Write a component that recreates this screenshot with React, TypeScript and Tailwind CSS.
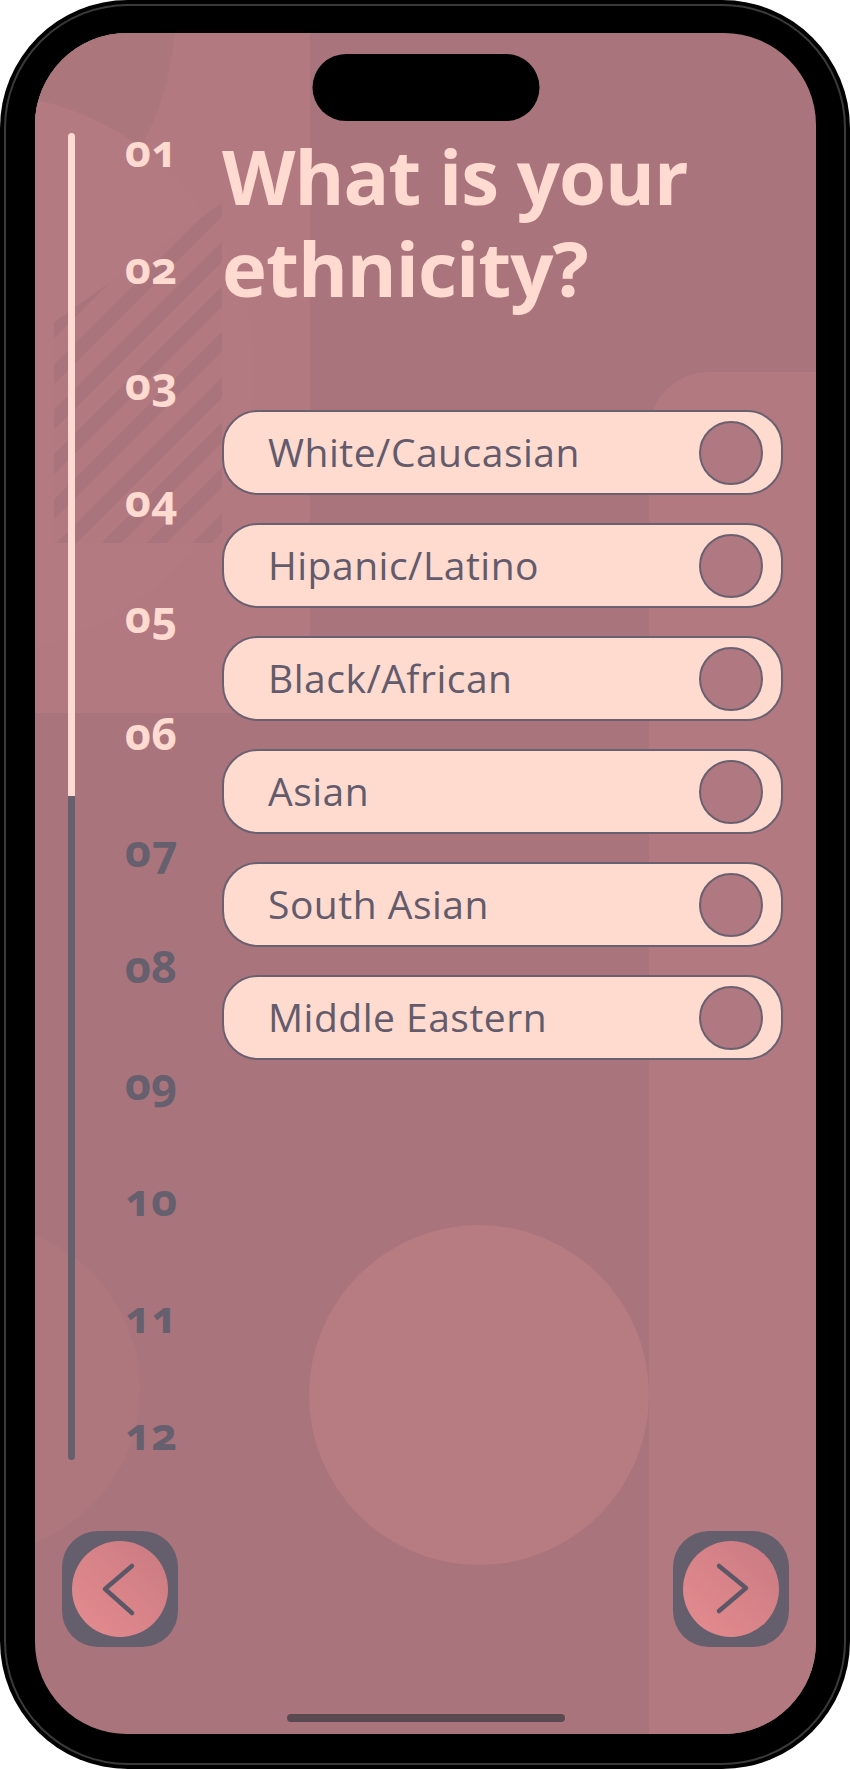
import React from "react";

const options = [
  "White/Caucasian",
  "Hipanic/Latino",
  "Black/African",
  "Asian",
  "South Asian",
  "Middle Eastern",
];

const nums = ["01", "02", "03", "04", "05", "06", "07", "08", "09", "10", "11", "12"];

function NavButton({ dir }: { dir: "left" | "right" }) {
  return (
    <div className="w-[116px] h-[116px] rounded-[36px] bg-[#655F6D] p-[10px]">
      <div className="w-full h-full rounded-full bg-[linear-gradient(45deg,#E48C90_0%,#D98489_45%,#C97A82_100%)] flex items-center justify-center">
        <svg width="96" height="96" viewBox="0 0 96 96" fill="none">
          {dir === "left" ? (
            <polyline points="60,25 33,48 60,72" stroke="#5C5767" strokeWidth="4.5" strokeLinecap="round" strokeLinejoin="round" />
          ) : (
            <polyline points="36,25 63,47 36,70" stroke="#5C5767" strokeWidth="4.5" strokeLinecap="round" strokeLinejoin="round" />
          )}
        </svg>
      </div>
    </div>
  );
}

export default function App() {
  return (
    <div className="w-[850px] h-[1770px] bg-white">
      <div className="w-[850px] h-[1769px] rounded-[128px] bg-black p-[4px]">
        <div className="w-full h-full rounded-[124px] border-2 border-[#3a3a3a] bg-black pt-[27px] pb-[29px] pl-[29px] pr-[28px]">
          <div className="relative w-full h-full overflow-hidden rounded-[92px] bg-[#A9747C]">
            {/* background decorations */}
            <div className="absolute left-0 top-0 w-[275px] h-[680px] rounded-br-[80px] bg-[#B27980]" />
            <div className="absolute left-[-420px] top-[-300px] w-[560px] h-[560px] rounded-full bg-[#AC767D]" />
            <div className="absolute left-[-340px] top-[60px] w-[560px] h-[560px] rounded-full bg-[#B37A81]" />
            <div className="absolute left-[19px] top-[170px] w-[168px] h-[340px] [clip-path:polygon(0_35%,100%_0,100%_100%,0_100%)] bg-[repeating-linear-gradient(135deg,#B27980_0px,#B27980_18px,#AA747C_18px,#AA747C_32px)]" />
            <div className="absolute left-[614px] top-[339px] w-[200px] h-[1500px] rounded-tl-[60px] bg-[#B27980]" />
            <div className="absolute left-[-225px] top-[1191px] w-[330px] h-[330px] rounded-full bg-[#AE777E]" />
            <div className="absolute left-[274px] top-[1192px] w-[340px] h-[340px] rounded-full bg-[#B67C81]" />

            {/* notch */}
            <div className="absolute left-1/2 top-[21px] -translate-x-1/2 w-[227px] h-[67px] rounded-full bg-black z-10" />

            <div className="relative flex flex-col h-full">
              <div className="flex items-start">
                <div className="ml-[33px] mt-[100px] flex flex-col w-[7px]">
                  <div className="h-[663px] rounded-t-full bg-[#FFDAD0]" />
                  <div className="h-[664px] rounded-b-full bg-[#665F6D]" />
                </div>
                <div className="ml-[50px] mt-[59px] w-[97px] flex flex-col font-['Noto_Sans',sans-serif] font-bold text-[45px] oldstyle-nums">
                  {nums.map((n, i) => (
                    <div
                      key={n}
                      className={`h-[116.6px] leading-[116.6px] ${i < 6 ? "text-[#FFDAD0]" : "text-[#665F6D]"}`}
                    >
                      {n}
                    </div>
                  ))}
                </div>
                <div className="w-[561px] flex flex-col">
                  <h1 className="mt-[97px] font-['Open_Sans',sans-serif] font-bold text-[76px] tracking-[-1px] text-[#FFDAD0]">
                    <span className="block h-[92px] leading-[92px]">What is your</span>
                    <span className="block h-[92px] leading-[92px]">ethnicity?</span>
                  </h1>
                  <div className="mt-[96px] flex flex-col gap-[28px]">
                    {options.map((o) => (
                      <div
                        key={o}
                        className="h-[85px] rounded-[36px] border-2 border-[#6A6170] bg-[#FFDACF] flex items-center justify-between pl-[44px] pr-[18px]"
                      >
                        <span className="font-['Open_Sans',sans-serif] text-[39px] tracking-[0.5px] text-[#625B6C]">{o}</span>
                        <div className="w-[64px] h-[64px] rounded-full border-2 border-[#6A6170] bg-[#B07880]" />
                      </div>
                    ))}
                  </div>
                </div>
              </div>

              <div className="mt-auto flex justify-between px-[27px]">
                <NavButton dir="left" />
                <NavButton dir="right" />
              </div>
              <div className="mx-auto mt-[67px] mb-[12px] w-[278px] h-[8px] rounded-full bg-[#5B4951]" />
            </div>
          </div>
        </div>
      </div>
    </div>
  );
}
